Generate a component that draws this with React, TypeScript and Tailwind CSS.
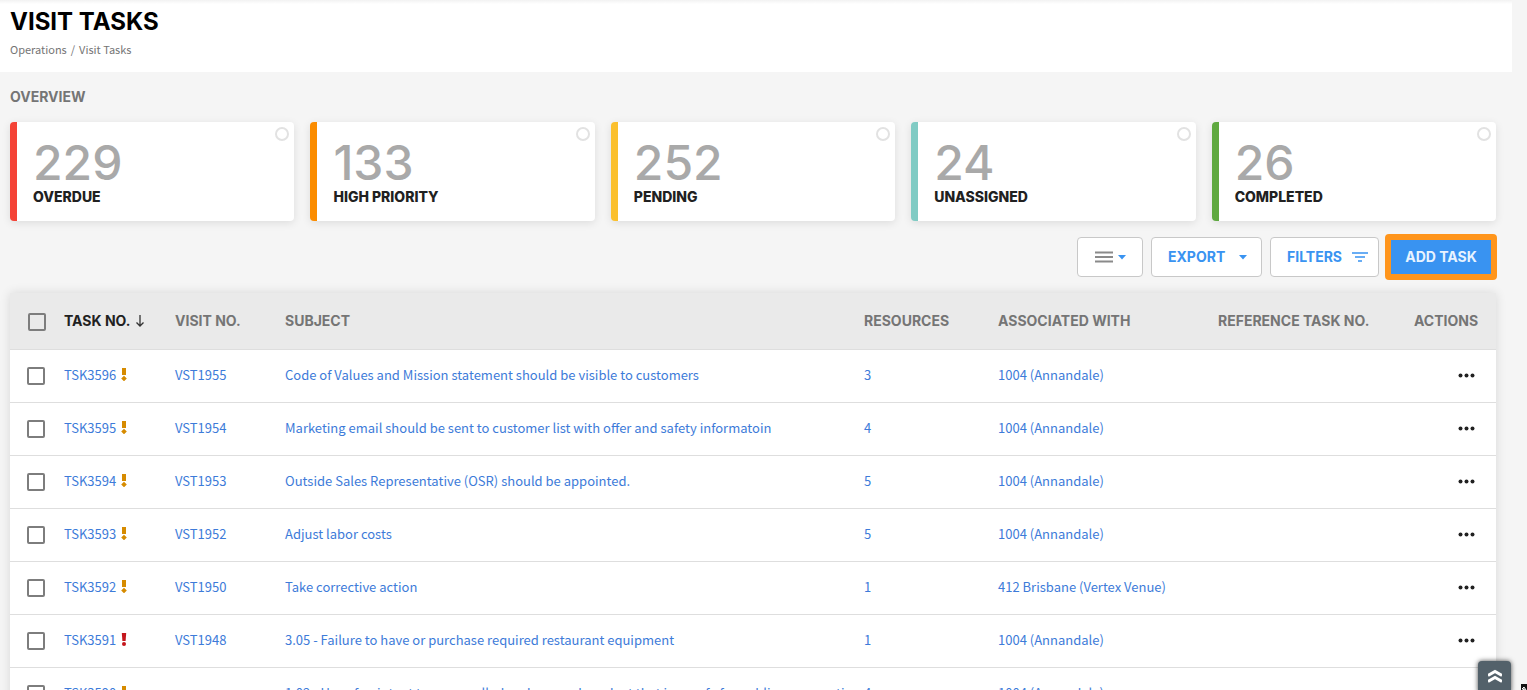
interface Stat {
  value: number;
  label: string;
  border: string;
}

interface Task {
  id: string;
  visit: string;
  subject: string;
  resources: number;
  location: string;
  critical?: boolean;
}

const stats: Stat[] = [
  { value: 229, label: "OVERDUE", border: "border-[#f44336]" },
  { value: 133, label: "HIGH PRIORITY", border: "border-[#fb8c00]" },
  { value: 252, label: "PENDING", border: "border-[#fbc02d]" },
  { value: 24, label: "UNASSIGNED", border: "border-[#80cbc4]" },
  { value: 26, label: "COMPLETED", border: "border-[#5fa940]" },
];

const tasks: Task[] = [
  { id: "TSK3596", visit: "VST1955", subject: "Code of Values and Mission statement should be visible to customers", resources: 3, location: "1004 (Annandale)" },
  { id: "TSK3595", visit: "VST1954", subject: "Marketing email should be sent to customer list with offer and safety informatoin", resources: 4, location: "1004 (Annandale)" },
  { id: "TSK3594", visit: "VST1953", subject: "Outside Sales Representative (OSR) should be appointed.", resources: 5, location: "1004 (Annandale)" },
  { id: "TSK3593", visit: "VST1952", subject: "Adjust labor costs", resources: 5, location: "1004 (Annandale)" },
  { id: "TSK3592", visit: "VST1950", subject: "Take corrective action", resources: 1, location: "412 Brisbane (Vertex Venue)" },
  { id: "TSK3591", visit: "VST1948", subject: "3.05 - Failure to have or purchase required restaurant equipment", resources: 1, location: "1004 (Annandale)", critical: true },
  { id: "TSK3590", visit: "", subject: "1.02 - Use of or intent to use recalled and sourced product that is unsafe for public consumption", resources: 4, location: "1004 (Annandale)" },
];

const checkbox =
  "block size-[18px] appearance-none rounded-xs border-2 border-[#7d7d7d] bg-transparent checked:bg-[#3993f1]";

const toolButton =
  "flex h-10 items-center rounded border border-[#c8c8c8] bg-white text-sm font-bold text-[#3993f1]";

function Caret() {
  return (
    <svg width="8" height="5" viewBox="0 0 8 5" fill="#3993f1" aria-hidden="true">
      <path d="M0 0h8L4 4.5z" />
    </svg>
  );
}

function PriorityIcon({ critical }: { critical?: boolean }) {
  if (critical) {
    return (
      <svg width="6" height="13" viewBox="0 0 6 13" fill="#c4161c" aria-hidden="true">
        <path d="M.8 0h4.400l-.6 8H1.400z" />
        <circle cx="3" cy="11" r="2" />
      </svg>
    );
  }
  return (
    <svg width="6" height="13" viewBox="0 0 6 13" fill="#d68b00" aria-hidden="true">
      <path d="M1 0h4v7H1zM3 7.700l2.800 2.800L3 13.300.2 10.500z" />
    </svg>
  );
}

function StatCard({ stat }: { stat: Stat }) {
  return (
    <label
      className={`relative block flex-1 rounded border-l-[7px] bg-white p-4 shadow-[0_2px_8px_rgba(0,0,0,0.1)] ${stat.border}`}
    >
      <span className="block text-5xl leading-[50px] font-medium text-[#a9a9a9]">{stat.value}</span>
      <span className="block text-sm leading-[17px] font-extrabold text-[#212121]">{stat.label}</span>
      <input
        type="radio"
        name="overview"
        className="absolute top-[5px] right-[5px] size-[14px] appearance-none rounded-full border-2 border-[#e2e2e2] checked:border-[#3993f1]"
      />
    </label>
  );
}

export default function App() {
  return (
    <div className="h-screen overflow-hidden bg-[#f5f5f5] font-['Inter',sans-serif]">
      <header className="mr-[15px] h-[72px] bg-white bg-linear-to-b from-[#f2f2f2] to-white to-[4px] px-[10px] pt-2">
        <h1 className="text-2xl leading-7 font-bold text-black">VISIT TASKS</h1>
        <nav
          aria-label="Breadcrumb"
          className="mt-[5px] flex gap-1 font-['Noto_Sans_CJK_SC',sans-serif] text-[11px] leading-4 text-[#757575]"
        >
          <a href="#operations">Operations</a>
          <span>/</span>
          <span>Visit Tasks</span>
        </nav>
      </header>

      <main className="pr-[31px] pl-[10px]">
        <h2 className="py-4 text-sm leading-[18px] font-bold text-[#757575]">OVERVIEW</h2>
        <div className="flex gap-4">
          {stats.map((stat) => (
            <StatCard key={stat.label} stat={stat} />
          ))}
        </div>

        <div className="my-4 -mr-px flex h-10 items-center justify-end gap-2">
          <button type="button" aria-label="Change view" className={`${toolButton} w-[66px] justify-center gap-[5px] pl-px`}>
            <svg width="18" height="12" viewBox="0 0 18 12" stroke="#8a8a8a" strokeWidth="1.800" aria-hidden="true">
              <path d="M0 1.500h18M0 6h18M0 10.500h18" />
            </svg>
            <Caret />
          </button>
          <button type="button" className={`${toolButton} w-[111px] justify-between pr-[14px] pl-4`}>
            EXPORT
            <Caret />
          </button>
          <button type="button" className={`${toolButton} w-[109px] justify-between pr-[10px] pl-4`}>
            FILTERS
            <svg width="16" height="10" viewBox="0 0 16 10" stroke="#3993f1" strokeWidth="1.600" aria-hidden="true">
              <path d="M0 1h16M3 5h10M6 9h4" />
            </svg>
          </button>
          <button
            type="button"
            className="-ml-0.5 h-[46px] w-[112px] rounded border-[6px] border-[#ff951c] bg-[#3993f1] text-sm font-bold whitespace-nowrap text-[#e8f3ff]"
          >
            ADD TASK
          </button>
        </div>

        <table className="w-full table-fixed border-collapse bg-white text-left shadow-[0_0_10px_rgba(0,0,0,0.12)]">
          <colgroup>
            <col className="w-[54px]" />
            <col className="w-[111px]" />
            <col className="w-[110px]" />
            <col />
            <col className="w-[134px]" />
            <col className="w-[220px]" />
            <col className="w-[196px]" />
            <col className="w-[82px]" />
          </colgroup>
          <thead>
            <tr className="h-14 border-b border-[#dedede] bg-[#eaeaea] text-sm whitespace-nowrap text-[#757575]">
              <th className="pt-0.5 pl-[18px]">
                <input type="checkbox" aria-label="Select all tasks" className={checkbox} />
              </th>
              <th className="font-bold text-[#212121]" aria-sort="descending">
                <span className="flex items-center gap-[5px]">
                  TASK NO.
                  <svg width="10" height="12" viewBox="0 0 10 12" fill="none" stroke="#333" strokeWidth="1.300" aria-hidden="true">
                    <path d="M5 0v11M1.500 7.500L5 11l3.500-3.500" />
                  </svg>
                </span>
              </th>
              <th className="font-bold">VISIT NO.</th>
              <th className="font-bold">SUBJECT</th>
              <th className="font-bold">RESOURCES</th>
              <th className="font-bold">ASSOCIATED WITH</th>
              <th className="font-bold">REFERENCE TASK NO.</th>
              <th className="font-bold">ACTIONS</th>
            </tr>
          </thead>
          <tbody className="font-['Noto_Sans_CJK_SC',sans-serif] text-[13px] leading-5 whitespace-nowrap text-[#3d7bd9]">
            {tasks.map((task) => (
              <tr key={task.id} className="h-[53px] border-b border-[#dedede]">
                <td className="pl-[17px]">
                  <input type="checkbox" aria-label={`Select ${task.id}`} className={checkbox} />
                </td>
                <td className="pb-0.5">
                  <span className="flex items-center gap-[5px]">
                    <a href={`#${task.id}`}>{task.id}</a>
                    <PriorityIcon critical={task.critical} />
                  </span>
                </td>
                <td className="pb-0.5">{task.visit && <a href={`#${task.visit}`}>{task.visit}</a>}</td>
                <td className="pb-0.5">
                  <a href={`#${task.id}`}>{task.subject}</a>
                </td>
                <td className="pb-0.5">{task.resources}</td>
                <td className="pb-0.5">{task.location}</td>
                <td />
                <td>
                  <button type="button" aria-label={`Actions for ${task.id}`} className="ml-11 block">
                    <svg width="17" height="5" viewBox="0 0 17 5" fill="#212121" aria-hidden="true">
                      <circle cx="2.500" cy="2.500" r="2" />
                      <circle cx="8.500" cy="2.500" r="2" />
                      <circle cx="14.500" cy="2.500" r="2" />
                    </svg>
                  </button>
                </td>
              </tr>
            ))}
          </tbody>
        </table>
      </main>

      <button
        type="button"
        aria-label="Back to top"
        className="fixed right-4 -bottom-1 flex h-[33px] w-[33px] justify-center rounded bg-[#53616a] pt-2 shadow-[0_0_5px_rgba(0,0,0,0.7)]"
      >
        <svg width="14" height="14" viewBox="0 0 14 14" fill="none" stroke="#fff" strokeWidth="3" aria-hidden="true">
          <path d="M0 6.500l7-4 7 4M0 12.500l7-4 7 4" />
        </svg>
      </button>
      <svg className="fixed right-0 bottom-0" width="6" height="6" viewBox="0 0 6 6" aria-hidden="true">
        <path d="M0 0h6v6H4L3 4 1 6H0z" fill="#111" />
        <path d="M1 5l2-2 2 3" fill="none" stroke="#fff" />
      </svg>
    </div>
  );
}
